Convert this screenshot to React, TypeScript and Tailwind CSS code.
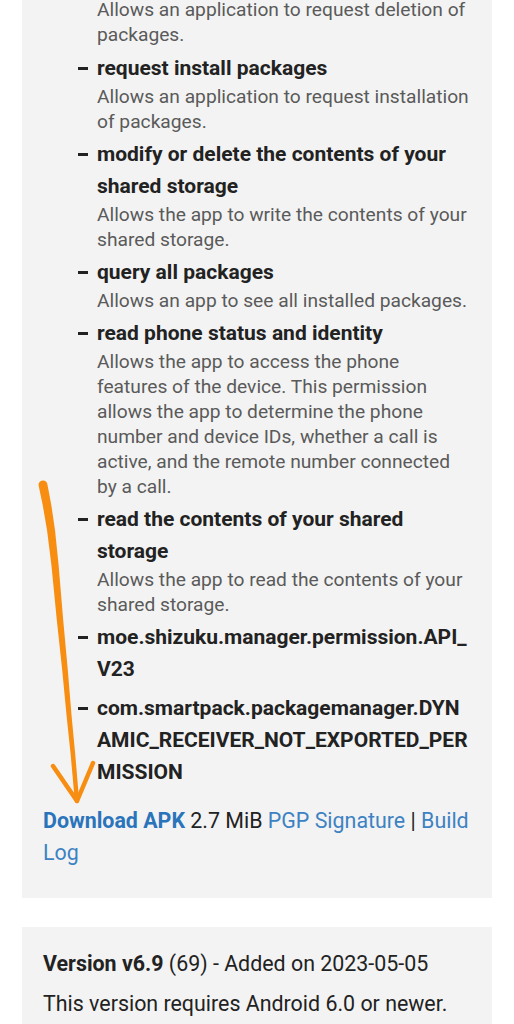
import React from "react";

type Perm = { title: string; desc?: string };

const perms: Perm[] = [
  { title: "request install packages", desc: "Allows an application to request installation of packages." },
  { title: "modify or delete the contents of your shared storage", desc: "Allows the app to write the contents of your shared storage." },
  { title: "query all packages", desc: "Allows an app to see all installed packages." },
  {
    title: "read phone status and identity",
    desc: "Allows the app to access the phone features of the device. This permission allows the app to determine the phone number and device IDs, whether a call is active, and the remote number connected by a call.",
  },
  { title: "read the contents of your shared storage", desc: "Allows the app to read the contents of your shared storage." },
  { title: "moe.shizuku.manager.permission.API_V23" },
  { title: "com.smartpack.packagemanager.DYNAMIC_RECEIVER_NOT_EXPORTED_PERMISSION" },
];

function Dash() {
  return (
    <div className="w-[20px] shrink-0 h-[32px] flex items-center">
      <div className="w-[10px] h-[3px] bg-[#222] ml-[1px]" />
    </div>
  );
}

const shaft =
  "M38.5 485 A4.5 4.5 0 0 1 47.5 485 " +
  "C49.5 495 51.3 505 51.3 505 L55 530 L58.6 565 L63.2 620 L67.8 670 L71.5 715 L75.3 755 L79.2 801 " +
  "A2.2 2.2 0 0 1 74.8 801 L70.7 755 L66.5 715 L62.2 670 L56.8 620 L51.4 565 L47 530 L42.7 505 Z";

export default function App() {
  return (
    <div className="bg-white min-h-[1024px] relative overflow-hidden" style={{ fontFamily: "Roboto, 'Noto Sans', sans-serif" }}>
      <div className="mx-[22px] bg-[#f3f3f3] px-[21px] pb-[29px] mt-[-3px]">
        <div className="pl-[54px] text-[19.2px] leading-[25px] text-[#5a5a5a]">
          Allows an application to request deletion of packages.
        </div>
        <ul className="flex flex-col gap-[4px] mt-[5px]">
          {perms.map((p, i) => (
            <li key={p.title} className={`flex pl-[34px] ${!p.desc && i < perms.length - 1 ? "pb-[3px]" : ""}`}>
              <Dash />
              <div className="min-w-0 flex-1">
                <div className="text-[21px] leading-[32px] font-bold text-[#222] [overflow-wrap:anywhere]">{p.title}</div>
                {p.desc && <div className="text-[19.2px] leading-[25px] text-[#5a5a5a]">{p.desc}</div>}
              </div>
            </li>
          ))}
        </ul>
        <p className="mt-[17px] text-[21.4px] leading-[32px] text-[#222]">
          <span className="font-bold text-[#2a74bb]">Download APK</span> 2.7 MiB{" "}
          <span className="text-[#3d82c2]">PGP Signature</span> | <span className="text-[#3d82c2]">Build Log</span>
        </p>
      </div>
      <div className="mx-[22px] mt-[29px] bg-[#f3f3f3] px-[21px] pt-[21px] pb-[20px]">
        <p className="text-[21.4px] leading-[32px] text-[#222]">
          <span className="font-bold">Version v6.9</span> (69) - Added on 2023-05-05
        </p>
        <p className="mt-[8px] text-[21.4px] leading-[32px] text-[#222]">This version requires Android 6.0 or newer.</p>
      </div>
      <svg className="absolute left-0 top-0 pointer-events-none" width="514" height="1024" viewBox="0 0 514 1024">
        <path d={shaft} fill="#f78e12" />
        <path d="M53 766 L 77 801 L 93 763" stroke="#f78e12" strokeWidth="4.5" fill="none" strokeLinecap="round" strokeLinejoin="round" />
      </svg>
    </div>
  );
}
